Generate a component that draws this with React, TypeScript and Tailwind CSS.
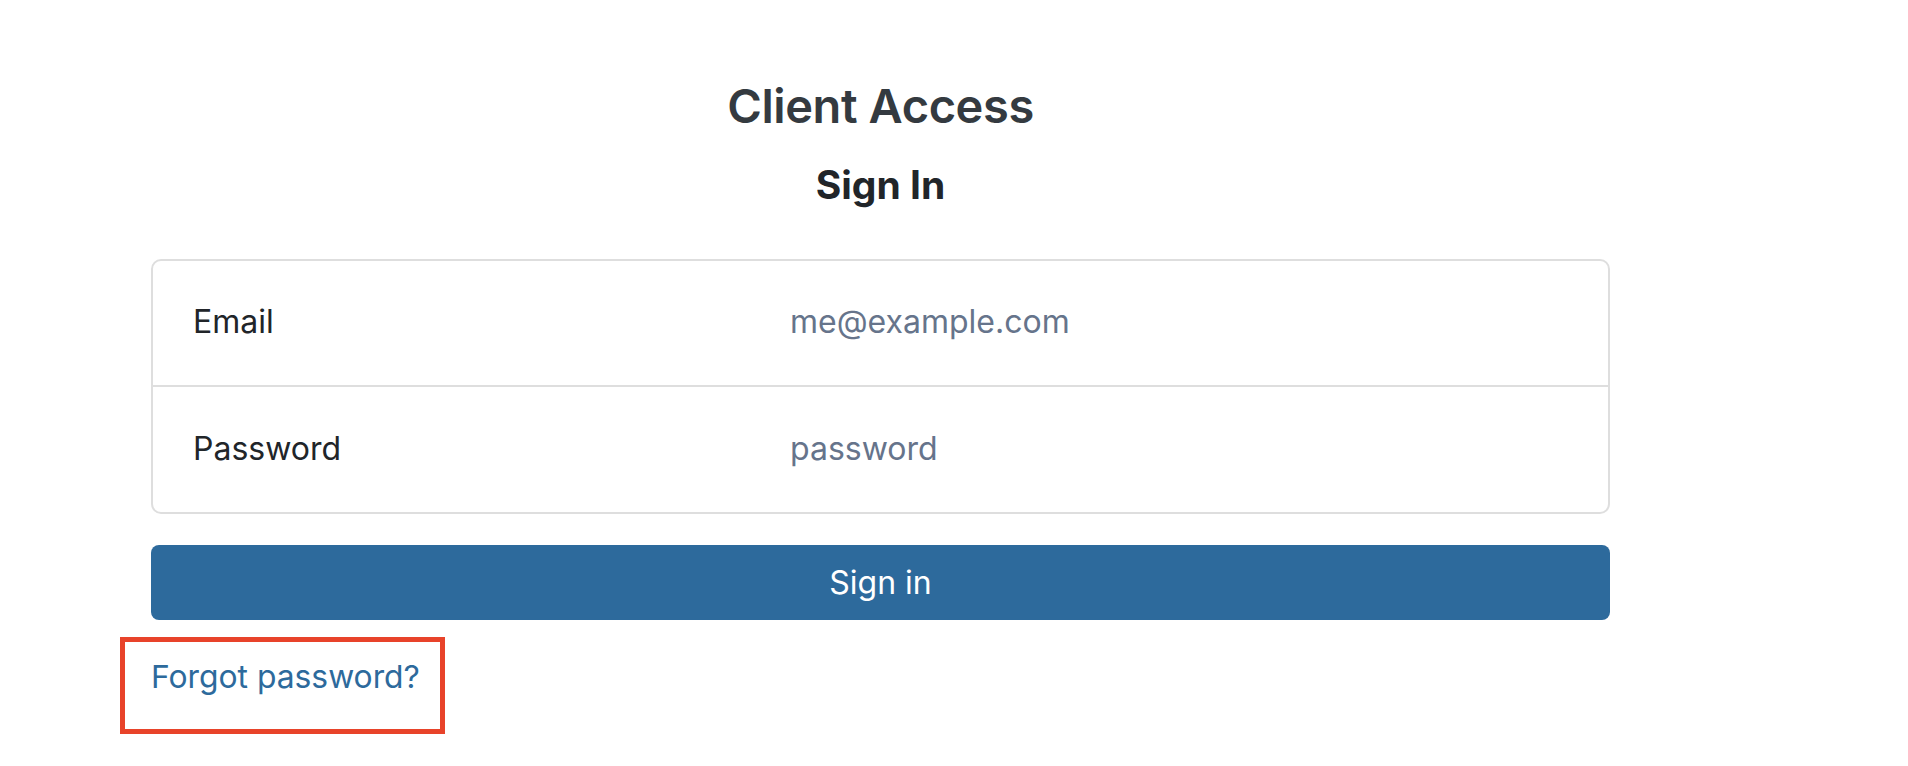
import React from "react";

export default function App() {
  return (
    <div className="min-h-[766px] w-full bg-white" style={{ fontFamily: "Inter, 'Noto Sans', sans-serif" }}>
      <div className="ml-[151px] w-[1459px] pt-[78px]">
        <h1 className="text-center text-[47px] leading-[1.2] font-semibold text-[#343a40] tracking-[-0.4px]">
          Client Access
        </h1>
        <h2 className="mt-[28px] text-center text-[39px] leading-[1.2] font-bold text-[#212529]">
          Sign In
        </h2>
        <div className="mt-[50px] rounded-[10px] border-2 border-[#dedede]">
          <div className="flex items-center px-[40px] pt-[37px] pb-[39px]">
            <label className="w-[597px] text-[32px] leading-[48px] text-[#212529]">Email</label>
            <span className="text-[32px] leading-[48px] text-[#66748b]">me@example.com</span>
          </div>
          <div className="border-t-2 border-[#dedede] flex items-center px-[40px] pt-[38px] pb-[39px]">
            <label className="w-[597px] text-[32px] leading-[48px] text-[#212529]">Password</label>
            <span className="text-[32px] leading-[48px] text-[#66748b]">password</span>
          </div>
        </div>
        <button className="mt-[31px] flex h-[75px] w-full items-center justify-center rounded-[8px] bg-[#2d6a9c] text-[32px] leading-[48px] text-white">
          Sign in
        </button>
        <div className="mt-[17px] -ml-[31px] inline-block border-[5px] border-[#e8432a] pl-[26px] pr-[20px] pt-[11px] pb-[28px]">
          <a className="text-[31.8px] leading-[48px] text-[#2d6a9c]">Forgot password?</a>
        </div>
      </div>
    </div>
  );
}
